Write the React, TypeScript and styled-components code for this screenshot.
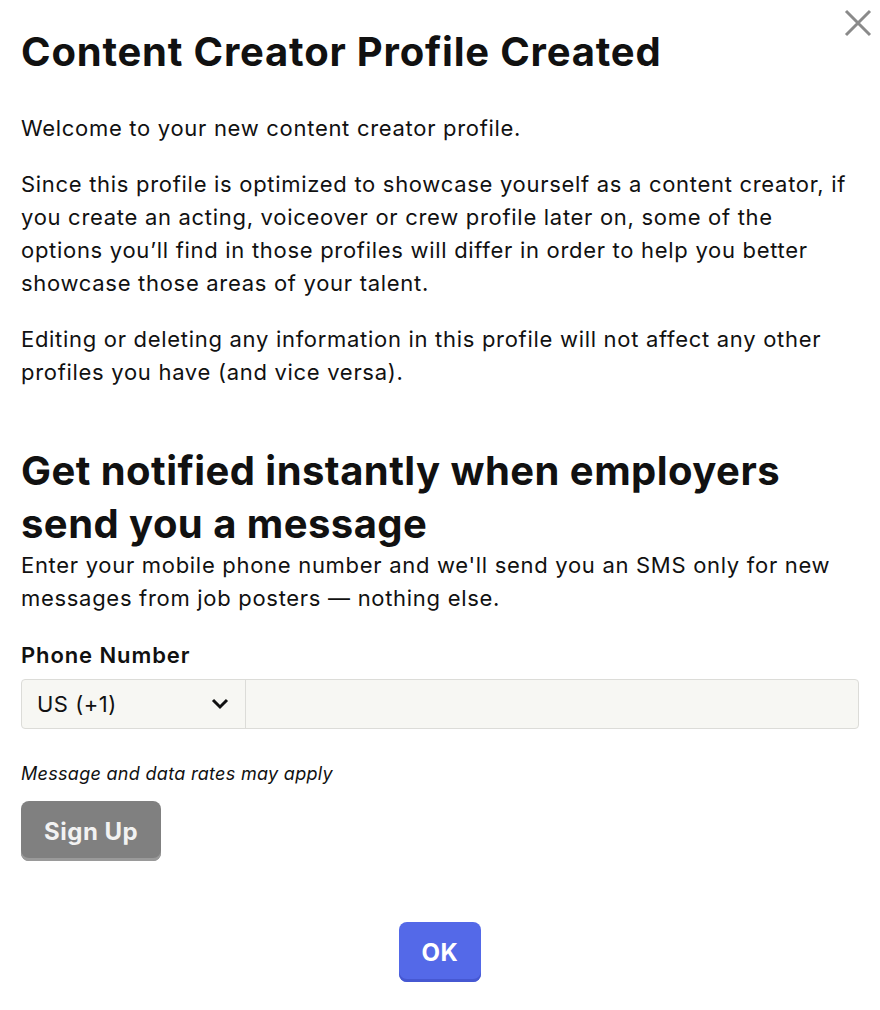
import React from "react";
import styled, { createGlobalStyle } from "styled-components";

const Global = createGlobalStyle`
  html, body { margin: 0; padding: 0; background: #ffffff; }
  body { font-family: Inter, "Noto Sans", sans-serif; color: #111111; }
  * { box-sizing: border-box; }
`;

const Modal = styled.div`
  position: relative;
  width: 880px;
  height: 1010px;
  padding: 28px 21px 0 21px;
  display: flex;
  flex-direction: column;
  align-items: stretch;
`;

const Close = styled.button`
  position: absolute;
  top: 9px;
  right: 8px;
  width: 28px;
  height: 28px;
  padding: 0;
  border: 0;
  background: transparent;
  display: flex;
  align-items: center;
  justify-content: center;
`;

const Title = styled.h1`
  margin: 0;
  font-size: 40px;
  line-height: 48px;
  font-weight: 700;
  letter-spacing: 0.8px;
  color: #111;
`;

const Body = styled.p<{ $mt?: number }>`
  margin: ${(p) => p.$mt ?? 0}px 0 0 0;
  font-size: 22px;
  line-height: 33px;
  font-weight: 400;
  letter-spacing: 0.7px;
  color: #111;
`;

const Heading = styled.h2`
  margin: 55px 0 0 0;
  font-size: 40px;
  line-height: 53px;
  font-weight: 700;
  letter-spacing: 0.45px;
  color: #111;
`;

const Label = styled.div`
  margin-top: 25px;
  font-size: 22px;
  line-height: 30px;
  font-weight: 600;
  letter-spacing: 0.9px;
`;

const PhoneRow = styled.div`
  margin-top: 9px;
  display: flex;
  flex: none;
  height: 50px;
  border: 1px solid #dcdcd8;
  border-radius: 4px;
  background: #f7f7f3;
  overflow: hidden;
`;

const Select = styled.div`
  width: 224px;
  display: flex;
  align-items: center;
  justify-content: space-between;
  padding: 0 16px 0 15px;
  border-right: 1px solid #dcdcd8;
  font-size: 22px;
  letter-spacing: 0.5px;
`;

const PhoneInput = styled.input`
  flex: 1;
  border: 0;
  background: transparent;
  outline: none;
`;

const Note = styled.div`
  margin-top: 33px;
  font-size: 18px;
  line-height: 24px;
  font-style: italic;
  letter-spacing: 0.3px;
`;

const Button = styled.button<{ $bg: string; $edge: string; $fg: string }>`
  height: 60px;
  padding: 0 23px;
  border: 0;
  border-radius: 8px;
  background: ${(p) => p.$bg};
  box-shadow: inset 0 -3px 0 ${(p) => p.$edge};
  color: ${(p) => p.$fg};
  font-family: Inter, "Noto Sans", sans-serif;
  font-size: 24px;
  font-weight: 700;
  letter-spacing: 0.5px;
`;

const SignUpWrap = styled.div`
  margin-top: 15px;
`;

const Footer = styled.div`
  margin-top: 61px;
  display: flex;
  justify-content: center;
`;

export default function App() {
  return (
    <>
      <Global />
      <Modal>
        <Close aria-label="Close">
          <svg width="28" height="28" viewBox="0 0 28 28">
            <path d="M2 2 L26 26 M26 2 L2 26" stroke="#8a8a8a" strokeWidth="3" strokeLinecap="butt" />
          </svg>
        </Close>
        <Title>Content Creator Profile Created</Title>
        <Body $mt={36}>Welcome to your new content creator profile.</Body>
        <Body $mt={23}>
          Since this profile is optimized to showcase yourself as a content creator, if you create an acting,
          voiceover or crew profile later on, some of the options you’ll find in those profiles will differ in order
          to help you better showcase those areas of your talent.
        </Body>
        <Body $mt={23}>
          Editing or deleting any information in this profile will not affect any other profiles you have (and vice
          versa).
        </Body>
        <Heading>Get notified instantly when employers send you a message</Heading>
        <Body $mt={-1}>
          Enter your mobile phone number and we'll send you an SMS only for new messages from job posters — nothing
          else.
        </Body>
        <Label>Phone Number</Label>
        <PhoneRow>
          <Select>
            <span>US (+1)</span>
            <svg width="18" height="12" viewBox="0 0 18 12">
              <path d="M2 2 L9 9 L16 2" fill="none" stroke="#111" strokeWidth="3" />
            </svg>
          </Select>
          <PhoneInput type="tel" aria-label="Phone number" />
        </PhoneRow>
        <Note>Message and data rates may apply</Note>
        <SignUpWrap>
          <Button $bg="#808080" $edge="#9a9a9a" $fg="#f2f2f2">Sign Up</Button>
        </SignUpWrap>
        <Footer>
          <Button $bg="#5469e8" $edge="#4658d2" $fg="#ffffff">OK</Button>
        </Footer>
      </Modal>
    </>
  );
}
